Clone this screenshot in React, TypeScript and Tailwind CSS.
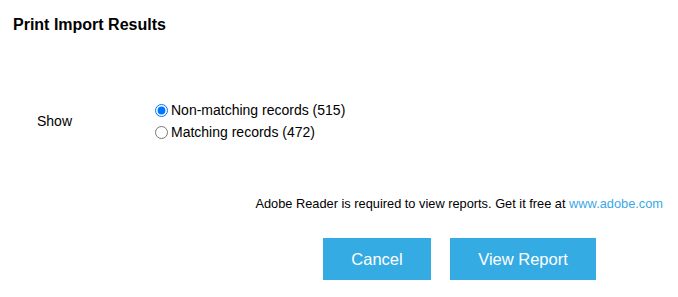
import React, { useState } from "react";

export default function App() {
  const [choice, setChoice] = useState("non");

  return (
    <div className="w-[678px] h-[297px] bg-white text-black font-['Liberation_Sans',Arial,sans-serif]">
      <h1 className="pl-[13px] pt-[16px] text-[16px] font-bold leading-[18px]">Print Import Results</h1>

      <div className="flex mt-[65px]">
        <div className="w-[155px] pl-[37px] pt-[12px] text-[14px] leading-[20px]">Show</div>
        <div className="flex flex-col text-[14px] leading-[22px]">
          <label className="flex items-center gap-[3px]">
            <input
              type="radio"
              name="show"
              checked={choice === "non"}
              onChange={() => setChoice("non")}
              className="m-0 w-[13px] h-[13px] accent-[#0075ff]"
            />
            Non-matching records (515)
          </label>
          <label className="flex items-center gap-[3px]">
            <input
              type="radio"
              name="show"
              checked={choice === "match"}
              onChange={() => setChoice("match")}
              className="m-0 w-[13px] h-[13px] accent-[#0075ff]"
            />
            Matching records (472)
          </label>
        </div>
      </div>

      <p className="mt-[53px] pr-[15px] text-right text-[12.8px] leading-[16px]">
        Adobe Reader is required to view reports. Get it free at{" "}
        <a href="#" className="text-[#3aa8e6]">www.adobe.com</a>
      </p>

      <div className="flex justify-end gap-[19px] pr-[82px] mt-[26px]">
        <button className="w-[108px] h-[42px] bg-[#35abe4] text-white text-[16.5px]">Cancel</button>
        <button className="w-[146px] h-[42px] bg-[#35abe4] text-white text-[16.5px]">View Report</button>
      </div>
    </div>
  );
}
